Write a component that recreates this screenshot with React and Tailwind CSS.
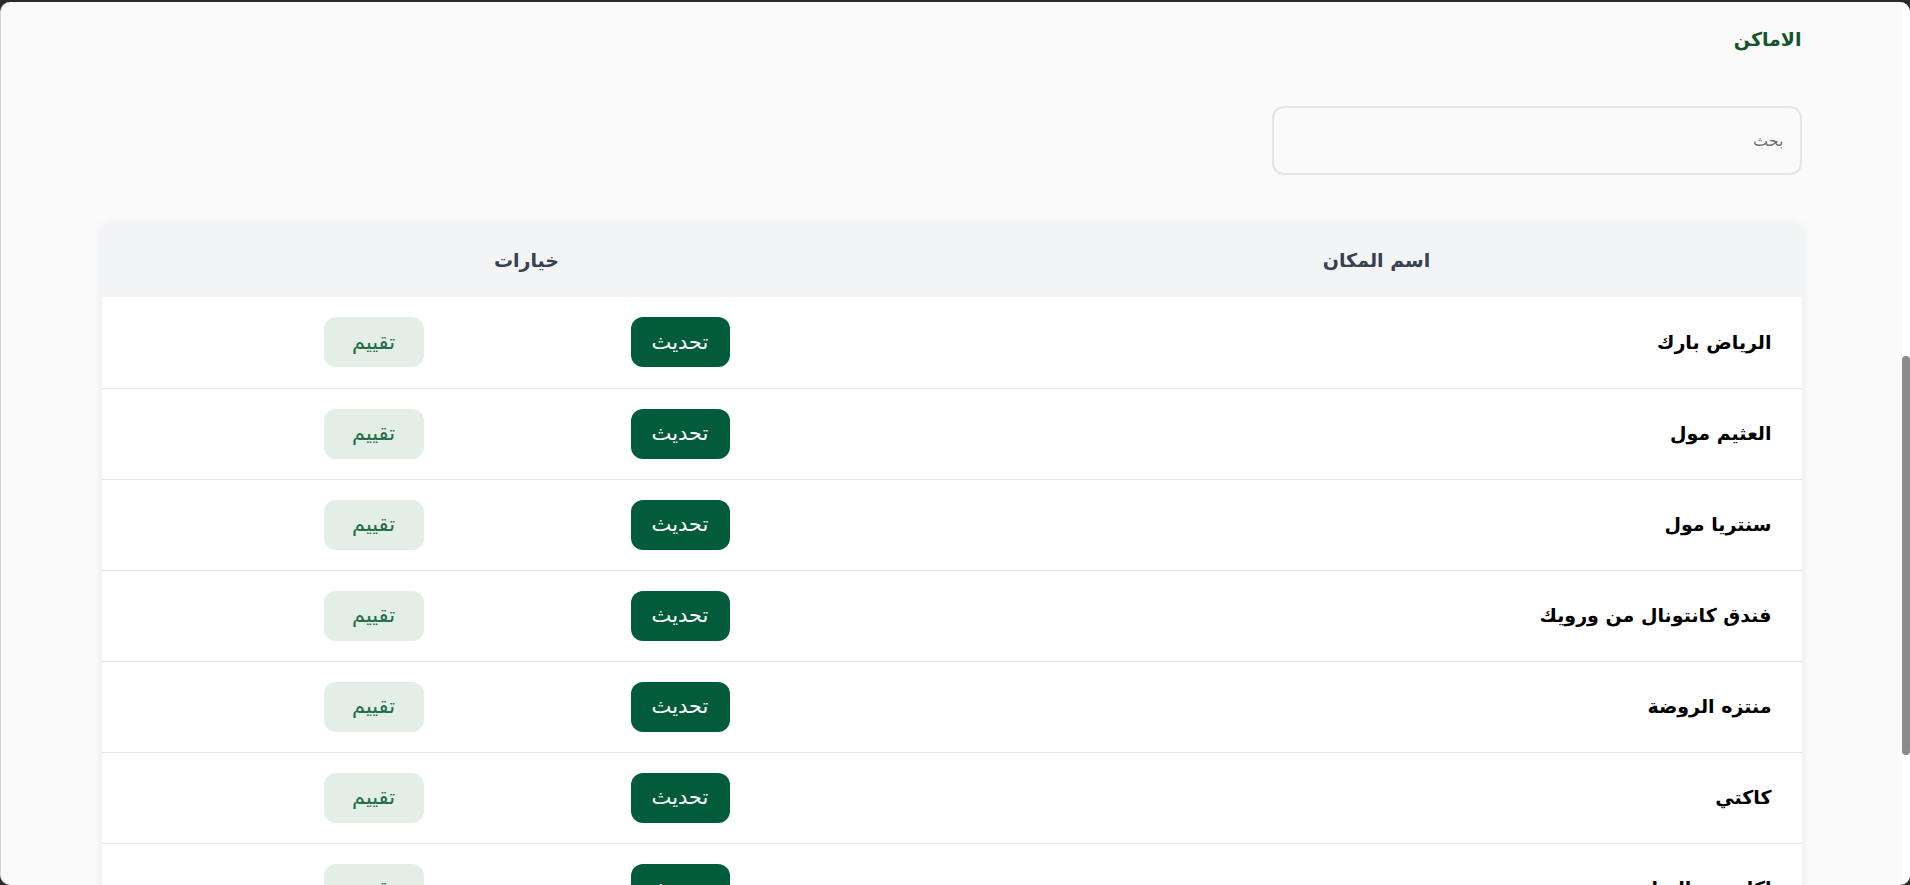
import React from "react";

const places = [
  "الرياض بارك",
  "العثيم مول",
  "سنتريا مول",
  "فندق كانتونال من ورويك",
  "منتزه الروضة",
  "كاكتي",
  "اكاديمية الرياضة",
];

export default function App() {
  return (
    <div
      className="h-[885px] w-full overflow-hidden bg-[#2b2b2b] pt-[2px]"
      style={{ fontFamily: '"DejaVu Sans", sans-serif' }}
    >
      <div className="flex h-[883px] overflow-hidden rounded-[10px] border-l border-[#d4d4d4] bg-[#fafafa]">
        <div className="flex-1 overflow-hidden" dir="rtl">
          <div className="mx-auto w-[1700px]">
            <h1 className="pt-[25px] text-[19px] font-bold leading-[24px] text-[#14532d]">
              الاماكن
            </h1>
            <div className="mt-[55px] w-[530px]">
              <input
                placeholder="بحث"
                className="h-[69px] w-full rounded-xl border-2 border-[#e5e5e5] bg-[#fafafa] px-4 text-[16px] text-gray-700 placeholder:text-[#6b7280] outline-none"
              />
            </div>
            <div className="mt-[48px] overflow-hidden rounded-lg bg-white shadow-[0_2px_10px_rgba(0,0,0,0.08)]">
              <table className="w-full border-collapse">
                <thead>
                  <tr className="h-[74px] bg-[#f3f4f6]">
                    <th className="w-1/2 text-center text-[19px] font-bold text-[#374151]">
                      اسم المكان
                    </th>
                    <th className="w-1/2 text-center text-[19px] font-bold text-[#374151]">
                      خيارات
                    </th>
                  </tr>
                </thead>
                <tbody>
                  {places.map((p) => (
                    <tr key={p} className="border-b border-[#e5e7eb]">
                      <td className="h-[91px] pr-[30px] text-right text-[19px] font-bold text-black">
                        {p}
                      </td>
                      <td className="h-[91px]">
                        <div className="flex items-center justify-center gap-[207px]">
                          <button className="h-[50px] w-[99px] rounded-xl bg-[#025c3c] text-[21px] font-normal text-white">
                            تحديث
                          </button>
                          <button className="h-[50px] w-[100px] rounded-xl bg-[#e2eee6] text-[21px] font-normal text-[#236d49]">
                            تقييم
                          </button>
                        </div>
                      </td>
                    </tr>
                  ))}
                </tbody>
              </table>
            </div>
          </div>
        </div>
        <div className="w-[8px] shrink-0 bg-white">
          <div className="mt-[354px] h-[399px] rounded-full bg-[#8b8b8b]" />
        </div>
      </div>
    </div>
  );
}
